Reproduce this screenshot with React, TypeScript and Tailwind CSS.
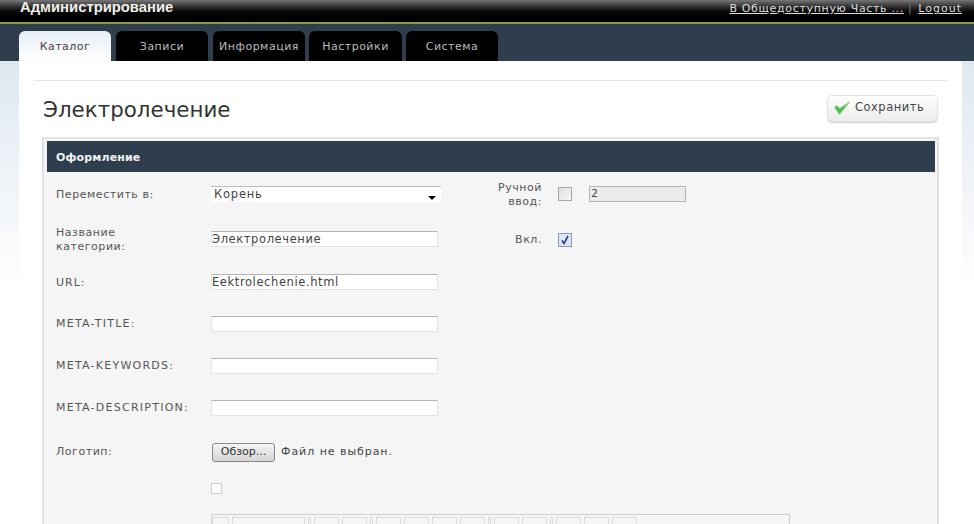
const tabs = [
  { label: 'Каталог', active: true, className: 'w-[92px]' },
  { label: 'Записи', active: false, className: 'ml-[1px] w-[92px]' },
  { label: 'Информация', active: false, className: 'ml-[1px] w-[92px]' },
  { label: 'Настройки', active: false, className: 'w-[93px]' },
  { label: 'Система', active: false, className: 'w-[92px]' },
];

const fields = ['META-TITLE:', 'META-KEYWORDS:', 'META-DESCRIPTION:'];

const toolbarWidths = [17, 73, 3, 25, 25, 3, 25, 25, 25, 25, 3, 25, 25, 3, 25, 25, 25];

function TextBox({ value }: { value: string }) {
  return (
    <div className="h-[16px] w-[227px] border border-[#e4e4e4] border-t-[#b5b5b5] bg-white text-[11.5px] leading-[14px] tracking-[0.6px] text-[#444]">
      {value}
    </div>
  );
}

export default function App() {
  return (
    <div className="relative h-[524px] w-[974px] overflow-hidden bg-white font-['DejaVu_Sans',sans-serif]">
      {/* Top bar */}
      <div className="flex h-[22px] items-start justify-between bg-gradient-to-b from-[#777] via-[#0a0a0a] to-black pl-[20px] pr-[12px]">
        <span className="text-[14.8px] font-bold leading-[15px] text-[#f0f0e8] font-['Liberation_Sans',sans-serif]">
          Администрирование
        </span>
        <div className="flex items-center pt-[1px] text-[11px] leading-[16px] tracking-[0.67px] text-[#ddd]">
          <span className="underline">В Общедоступную Часть ...</span>
          <span className="ml-[4px] mr-[6px] text-[#777]">|</span>
          <span className="underline tracking-[1px]">Logout</span>
        </div>
      </div>
      <div className="h-[2px] bg-[#8b9b4d]" />

      {/* Tabs */}
      <div className="flex h-[37px] items-end gap-[4px] bg-[#2f3e4c] pl-[19px]">
        {tabs.map((tab) => (
          <div
            key={tab.label}
            className={`flex h-[30px] items-center justify-center rounded-t-[6px] pt-[2px] text-[11px] tracking-[0.5px] ${tab.className} ${
              tab.active ? 'bg-gradient-to-b from-[#e6eef5] to-white text-[#444]' : 'bg-black text-[#bbb]'
            }`}
          >
            {tab.label}
          </div>
        ))}
      </div>

      {/* Body */}
      <div className="flex h-[463px] bg-gradient-to-b from-[#dfe8f1] via-white to-white">
        <div className="w-[19px] shrink-0" />
        <div className="w-[943px] shrink-0 bg-white px-[15px] pt-[19px]">
          <div className="w-[914px] border-t border-[#e4e4e4]" />
          <div className="mt-[13px] flex h-[28px] items-center justify-between px-[9px]">
            <h1 className="mt-[4px] text-[21.4px] font-normal leading-[28px] text-[#333]">Электролечение</h1>
            <button className="flex h-[27px] w-[111px] items-center gap-[4px] rounded-[5px] border border-[#e3e3e3] bg-gradient-to-b from-white to-[#ececec] pl-[5px] text-[11.5px] tracking-[0.5px] text-[#444] shadow-[0_1px_1px_#ccc]">
              <svg width="18" height="16" viewBox="0 0 18 16" fill="none">
                <path d="M1.5 7.5 L6.5 14.5 L16.5 2 L6.8 8.5 L4 5.5 Z" fill="#55b855" stroke="#86d486" strokeWidth="1" />
              </svg>
              Сохранить
            </button>
          </div>

          {/* Form panel */}
          <div className="ml-[8px] mt-[15px] h-[400px] w-[897px] border-2 border-b-0 border-[#e2e2e2] bg-[#f5f5f5] px-[3px] pt-[2px]">
            <div className="flex h-[31px] w-[888px] items-center bg-[#2f3e4c] pl-[9px] pt-[3px] text-[11px] font-bold tracking-[0.15px] text-[#f2f2f2]">
              Оформление
            </div>

            <div className="flex pl-[9px] text-[11px] tracking-[0.55px] text-[#555]">
              <div className="w-[442px] shrink-0">
                <div className="mt-[14px] flex h-[16px] items-center">
                  <span className="w-[155px] pt-[2px]">Переместить в:</span>
                  <div className="flex h-[16px] w-[230px] items-center justify-between border-t border-[#bdbdbd] bg-white pl-[3px] pr-[5px] text-[11.5px] tracking-[0.8px] text-[#444]">
                    Корень
                    <span className="mt-[6px] h-0 w-0 border-x-[4px] border-t-[4px] border-x-transparent border-t-black" />
                  </div>
                </div>
                <div className="mt-[22px] flex h-[30px] items-center">
                  <span className="w-[155px] pt-[1px] leading-[14px]">Название<br />категории:</span>
                  <TextBox value="Электролечение" />
                </div>
                <div className="mt-[13px] flex h-[30px] items-center">
                  <span className="w-[155px] pt-[2px] tracking-[1px]">URL:</span>
                  <TextBox value="Eektrolechenie.html" />
                </div>
                {fields.map((label) => (
                  <div key={label} className="mt-[12px] flex h-[30px] items-center">
                    <span className="w-[155px] tracking-[1.25px]">{label}</span>
                    <TextBox value="" />
                  </div>
                ))}
                <div className="mt-[14px] flex h-[30px] items-center">
                  <span className="w-[156px]">Логотип:</span>
                  <button className="flex h-[19px] w-[63px] items-center justify-center rounded-[3px] border border-[#8a8a8a] bg-gradient-to-b from-[#f4f4f4] to-[#d5d5d5] text-[11px] tracking-normal text-[#333]">
                    Обзор...
                  </button>
                  <span className="ml-[6px] tracking-[0.95px] text-[#444]">Файл не выбран.</span>
                </div>
                <div className="ml-[155px] mt-[16px] h-[11px] w-[11px] border border-[#cfcfcf] bg-white" />
                <div className="ml-[155px] mt-[20px] flex h-[20px] w-[579px] gap-[3px] border border-[#cfcfcf] pt-[2px]">
                  {toolbarWidths.map((width, i) => (
                    <div key={i} className="h-[18px] border border-[#dcdcdc]" style={{ width }} />
                  ))}
                </div>
              </div>

              <div className="text-right">
                <div className="mt-[7px] flex items-center">
                  <span className="w-[44px] pt-[2px] leading-[14px]">Ручной<br />ввод:</span>
                  <div className="ml-[16px] h-[14px] w-[14px] border border-[#9aa] bg-gradient-to-br from-[#ddd] to-[#f8f8f8]" />
                  <div className="ml-[17px] h-[16px] w-[97px] border border-[#b5b5b5] bg-[#ececec] pl-[1px] text-left text-[11px] leading-[14px] text-[#444]">2</div>
                </div>
                <div className="mt-[23px] flex items-center">
                  <span className="w-[44px]">Вкл.</span>
                  <div className="ml-[16px] flex h-[14px] w-[14px] items-center justify-center border border-[#8a9ab5] bg-[#dfe4f2]">
                    <svg width="10" height="10" viewBox="0 0 10 10" fill="none">
                      <path d="M2 5.5 L4 8.5 L8 1" stroke="#2a3f8f" strokeWidth="1.6" />
                    </svg>
                  </div>
                </div>
              </div>
            </div>
          </div>
        </div>
        <div className="grow" />
      </div>
    </div>
  );
}
